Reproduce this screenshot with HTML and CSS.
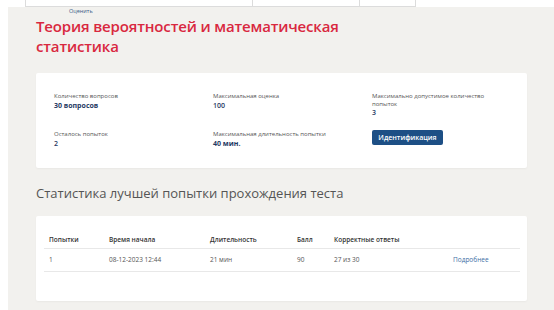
FILE: index.html
```html
<!DOCTYPE html>
<html lang="ru">
<head>
    <meta charset="UTF-8">
    <meta name="viewport" content="width=device-width, initial-scale=1.0">
    <title>Тест</title>
    <link rel="stylesheet" href="styles.css">
</head>
<body>
    <div class="top-strip">
        <div class="strip-cell strip-a"></div>
        <div class="strip-cell strip-b"></div>
        <div class="strip-cell strip-c"></div>
        <div class="strip-cell strip-d"></div>
    </div>

    <div class="page">
        <a class="rate-link" href="#">Оценить</a>
        <h1 class="test-title">Теория вероятностей и математическая статистика</h1>

        <div class="card info-card">
            <div class="info-item">
                <div class="info-label">Количество вопросов</div>
                <div class="info-value">30 вопросов</div>
            </div>
            <div class="info-item">
                <div class="info-label">Максимальная оценка</div>
                <div class="info-value plain">100</div>
            </div>
            <div class="info-item">
                <div class="info-label">Максимально допустимое количество попыток</div>
                <div class="info-value plain">3</div>
            </div>
            <div class="info-item">
                <div class="info-label">Осталось попыток</div>
                <div class="info-value plain">2</div>
            </div>
            <div class="info-item">
                <div class="info-label">Максимальная длительность попытки</div>
                <div class="info-value">40 мин.</div>
            </div>
            <div class="info-item">
                <button class="ident-btn" type="button">Идентификация</button>
            </div>
        </div>

        <h2 class="section-title">Статистика лучшей попытки прохождения теста</h2>

        <div class="card stats-card">
            <table class="stats-table">
                <thead>
                    <tr>
                        <th class="col-try">Попытки</th>
                        <th class="col-start">Время начала</th>
                        <th class="col-dur">Длительность</th>
                        <th class="col-score">Балл</th>
                        <th class="col-correct">Корректные ответы</th>
                        <th class="col-more"></th>
                    </tr>
                </thead>
                <tbody>
                    <tr>
                        <td>1</td>
                        <td>08-12-2023 12:44</td>
                        <td>21 мин</td>
                        <td>90</td>
                        <td>27 из 30</td>
                        <td><a href="#">Подробнее</a></td>
                    </tr>
                </tbody>
            </table>
        </div>
    </div>
</body>
</html>
```

FILE: styles.css
```css
* {
    margin: 0;
    padding: 0;
    box-sizing: border-box;
}

body {
    font-family: 'Open Sans', 'Noto Sans', sans-serif;
    background: #fff;
    color: #555;
    width: 554px;
    height: 310px;
    overflow: hidden;
}

/* полоска таблицы сверху */
.top-strip {
    display: flex;
    height: 7px;
}

.strip-cell {
    height: 7px;
    border-right: 1px solid #dcdcdc;
    border-bottom: 1px solid #dcdcdc;
}

.strip-a { width: 26px; border-bottom: none; }
.strip-b { width: 227px; }
.strip-c { width: 107px; }
.strip-d { width: 56px; }

.page {
    margin-left: 8px;
    background: #f2f1ee;
    padding: 0 27px 20px 28px;
    min-height: 303px;
}

.rate-link {
    display: block;
    padding-left: 33px;
    font-size: 5.5px;
    line-height: 8px;
    color: #3a5a85;
    text-decoration: none;
}

.test-title {
    max-width: 320px;
    margin-top: 2px;
    font-size: 15px;
    letter-spacing: -0.15px;
    line-height: 19.5px;
    font-weight: 600;
    color: #d9283f;
}

.card {
    background: #fff;
    border-radius: 2px;
    box-shadow: 0 1px 2px rgba(0, 0, 0, 0.04);
}

.info-card {
    margin-top: 17px;
    padding: 20px 18px 20px 18px;
    display: grid;
    grid-template-columns: 159px 159px 137px;
    row-gap: 14px;
}

.info-label {
    font-size: 6px;
    line-height: 7.5px;
    color: #555;
}

.info-value {
    font-size: 7px;
    line-height: 9px;
    font-weight: 700;
    color: #1f3a63;
}

.info-value.plain {
    font-weight: 600;
}

.ident-btn {
    display: block;
    width: 71px;
    height: 15px;
    margin-top: -1px;
    background: #1d4f85;
    border: none;
    border-radius: 2px;
    color: #fff;
    font-family: 'Open Sans', 'Noto Sans', sans-serif;
    font-size: 7px;
    font-weight: 600;
    cursor: pointer;
}

.section-title {
    margin-top: 16px;
    font-size: 13px;
    line-height: 18px;
    font-weight: 400;
    color: #555;
}

.stats-card {
    margin-top: 14px;
    padding: 19px 7px 29px 8px;
}

.stats-table {
    width: 100%;
    border-collapse: collapse;
    table-layout: fixed;
}

.stats-table th,
.stats-table td {
    text-align: left;
    padding: 0 5px;
    font-size: 6.5px;
    line-height: 10px;
}

.stats-table th {
    font-weight: 600;
    color: #333;
    padding-bottom: 3px;
    border-bottom: 1px solid #e8e8e8;
}

.stats-table td {
    color: #555;
    padding-top: 6px;
    padding-bottom: 6px;
    border-bottom: 1px solid #e8e8e8;
}

.stats-table a {
    color: #3d6fa6;
    text-decoration: none;
}

.col-try { width: 60px; }
.col-start { width: 101px; }
.col-dur { width: 87px; }
.col-score { width: 37px; }
.col-correct { width: 119px; }
```
